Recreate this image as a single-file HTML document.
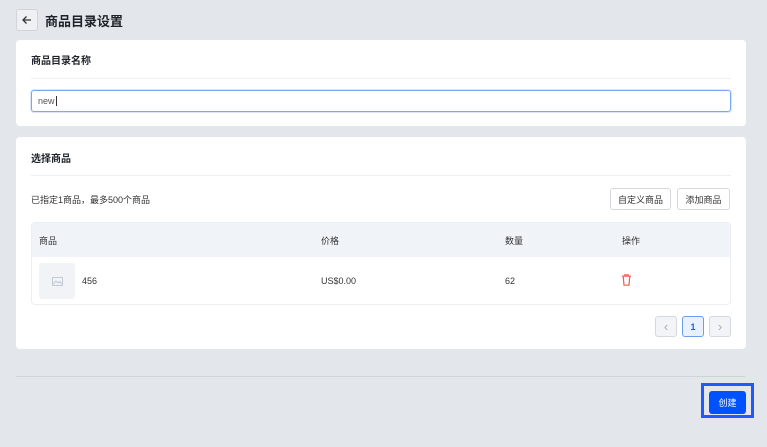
<!DOCTYPE html><html><head><meta charset="utf-8"><style>
*{box-sizing:border-box;margin:0;padding:0}
body{width:767px;height:447px;background:#e3e7ec;font-family:"Liberation Sans","Noto Sans CJK SC",sans-serif;color:#1f2329;position:relative;overflow:hidden}
.a{position:absolute}
.card{background:#fff;border-radius:4px}
.t{font-size:11px;font-weight:bold}
.s{font-size:9px;color:#333}
.btn{border:1px solid #d5d9de;border-radius:3px;background:#fff;font-size:9px;display:flex;align-items:center;justify-content:center;color:#333}
</style></head><body>
<div class="a" style="left:16px;top:9px;width:22px;height:22px;border:1px solid #cfd4da;border-radius:3px;background:#eef0f3;display:flex;align-items:center;justify-content:center">
<svg width="12" height="12" viewBox="0 0 12 12"><path d="M10 6H2M5.5 2.5L2 6l3.5 3.5" stroke="#333" stroke-width="1.3" fill="none"/></svg></div>
<div class="a" style="left:45px;top:11px;font-size:13px;font-weight:bold">商品目录设置</div>
<div class="a card" style="left:16px;top:40px;width:730px;height:86px">
<div class="a t" style="left:15px;top:12px;font-size:10px">商品目录名称</div>
<div class="a" style="left:15px;top:38px;width:700px;height:1px;background:#eef0f2"></div>
<div class="a" style="left:15px;top:50px;width:700px;height:22px;border:1px solid #7ea6f6;border-radius:3px;font-size:9px;color:#555;padding:5px 6px;box-shadow:0 0 0 1px #dbe6fd">new<span style="border-left:1px solid #333;margin-left:1px"></span></div>
</div>
<div class="a card" style="left:16px;top:137px;width:730px;height:212px">
<div class="a t" style="left:15px;top:13px;font-size:10px">选择商品</div>
<div class="a" style="left:15px;top:38px;width:700px;height:1px;background:#eef0f2"></div>
<div class="a s" style="left:15px;top:56px">已指定1商品，最多500个商品</div>
<div class="a btn" style="left:594px;top:51px;width:61px;height:22px">自定义商品</div>
<div class="a btn" style="left:661px;top:51px;width:53px;height:22px">添加商品</div>
<div class="a" style="left:15px;top:85px;width:700px;height:83px;border:1px solid #eceff2;border-radius:4px;overflow:hidden">
<div style="height:34px;background:#f0f4f8;position:relative">
<div class="a s" style="left:7px;top:11px">商品</div><div class="a s" style="left:289px;top:11px">价格</div><div class="a s" style="left:473px;top:11px">数量</div><div class="a s" style="left:590px;top:11px">操作</div></div>
<div class="a" style="left:7px;top:40px;width:36px;height:36px;background:#f1f3f6;border-radius:3px;display:flex;align-items:center;justify-content:center"><svg width="11" height="9" viewBox="0 0 11 9"><rect x=".5" y=".5" width="10" height="8" fill="none" stroke="#c4cad3"/><path d="M1 7l3-3 2 2 1.5-1.5L10 7" stroke="#c4cad3" fill="none"/></svg></div>
<div class="a s" style="left:50px;top:53px">456</div>
<div class="a s" style="left:289px;top:53px">US$0.00</div>
<div class="a s" style="left:473px;top:53px">62</div>
<svg class="a" style="left:589px;top:51px" width="11" height="12" viewBox="0 0 11 12"><path d="M1 2.2h9M3.8 2.2V.8h3.4v1.4M2.2 2.2l.8 9h5l.8-9" stroke="#f05a4f" stroke-width="1.2" fill="none"/></svg>
</div>
<div class="a btn" style="left:639px;top:179px;width:22px;height:21px;background:#f2f4f7;color:#aaa;font-size:13px">‹</div>
<div class="a btn" style="left:666px;top:179px;width:22px;height:21px;background:#e8f1fd;border-color:#6d9cf3;color:#1f5fd8;font-weight:bold">1</div>
<div class="a btn" style="left:693px;top:179px;width:22px;height:21px;background:#f2f4f7;color:#aaa;font-size:13px">›</div>
</div>
<div class="a" style="left:16px;top:376px;width:729px;height:1px;background:#cfd4db"></div>
<div class="a" style="left:701px;top:383px;width:53px;height:35px;border:3px solid #1e5bff"></div>
<div class="a" style="left:709px;top:391px;width:37px;height:23px;background:#0052ff;border-radius:3px;color:#fff;font-size:9px;display:flex;align-items:center;justify-content:center">创建</div>
</body></html>
